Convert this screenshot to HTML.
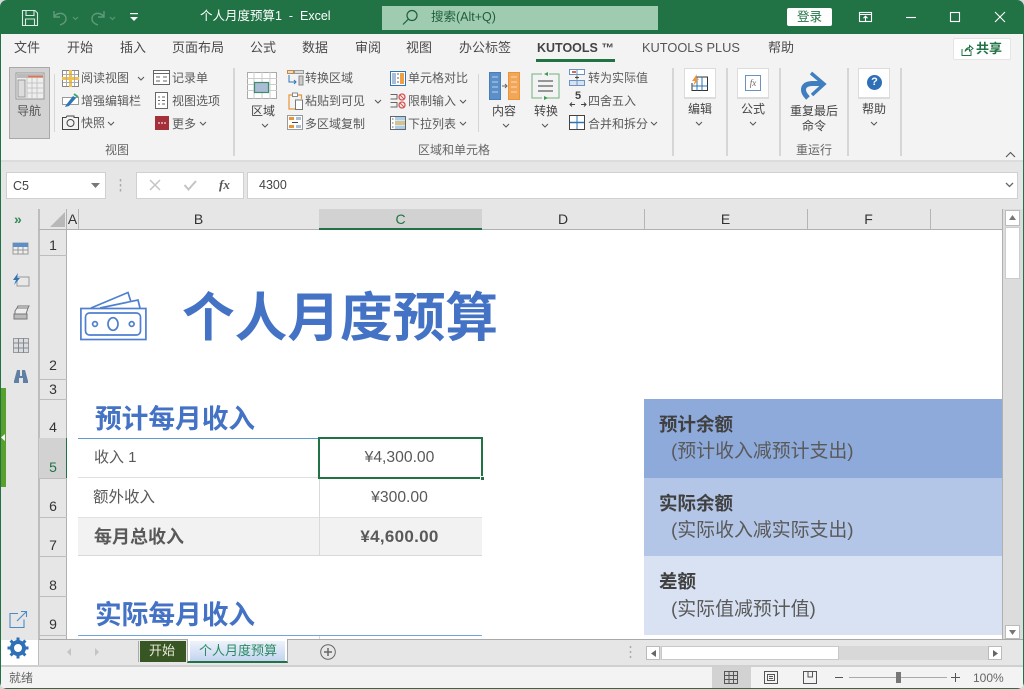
<!DOCTYPE html>
<html><head><meta charset="utf-8"><style>
*{box-sizing:border-box}
html,body{margin:0;padding:0;width:1024px;height:689px;overflow:hidden;background:#fff}
body{font-family:"Liberation Sans","Noto Sans CJK SC",sans-serif;position:relative}
div,svg{position:absolute}
.t{white-space:nowrap;font-size:12px;line-height:16px;color:#5a5a5a}
.tab{font-size:13px;line-height:18px;top:39px;color:#4a4a4a;white-space:nowrap}
.s{background:#d6d6d6;width:1px}
.ic{background:#fff;border:1px solid #dcdcdc;border-bottom-width:2px}
.rn{font-size:14px;line-height:16px;color:#333;width:28px;text-align:center;left:39px;white-space:nowrap}
.rl{background:#bdbdbd;height:1px;left:39px;width:28px}
.ch{font-size:14px;line-height:16px;color:#333;top:211px;text-align:center}
.cl{background:#b5b5b5;width:1px;top:209px;height:21px}
.v{font-size:15.700px;line-height:20px;color:#595959;text-align:center;left:318px;width:163px;white-space:nowrap}
.h{font-size:26.700px;line-height:34px;color:#4472c4;font-weight:bold;white-space:nowrap;left:95px}
.b1{font-size:18.500px;line-height:24px;font-weight:bold;color:#404040;left:659px;white-space:nowrap}
.b2{font-size:18.900px;line-height:24px;color:#595959;left:671px;white-space:nowrap}
</style></head><body>

<!-- title bar -->
<div style="left:0;top:0;width:1024px;height:34px;background:#217346"></div>
<svg style="left:20px;top:8px" width="20" height="20" viewBox="0 0 20 20" fill="none" stroke="#dcebe2" stroke-width="1.100"><path d="M2.500 2.500H15L17.500 5V17.500H2.500Z"/><path d="M6 2.500V7.500H14V2.500M5.500 17.500V11H14.500V17.500"/></svg>
<svg style="left:50px;top:9px" width="30" height="18" viewBox="0 0 30 18" fill="none" stroke="#5f9a7b" stroke-width="1.400"><path d="M4 2V8H10M4 8C7 3 15 3 16 9C16.500 13 13 15 10 16"/><path d="M23 8L25.500 10.500L28 8" stroke-width="1"/></svg>
<svg style="left:88px;top:9px" width="30" height="18" viewBox="0 0 30 18" fill="none" stroke="#5f9a7b" stroke-width="1.400"><path d="M16 2V8H10M16 8C13 3 5 3 4 9C3.500 13 7 15 10 16"/><path d="M22 8L24.500 10.500L27 8" stroke-width="1"/></svg>
<svg style="left:129px;top:12px" width="10" height="11" viewBox="0 0 10 11" fill="#fff"><rect x="1" y="1" width="8" height="1.200"/><path d="M1 5H9L5 9Z"/></svg>
<div class="t" style="left:200px;top:8px;font-size:12.500px;line-height:17px;color:#fff">个人月度预算1 &nbsp;-&nbsp; Excel</div>
<div style="left:382px;top:6px;width:276px;height:24px;background:#9fcbb1"></div>
<svg style="left:400px;top:8px" width="20" height="20" viewBox="0 0 20 20" fill="none" stroke="#1f5f3a" stroke-width="1.200"><circle cx="12" cy="7.500" r="5"/><path d="M8.500 11L3 16.500"/></svg>
<div class="t" style="left:431px;top:9px;font-size:12.500px;line-height:17px;color:#1f5f3a">搜索(Alt+Q)</div>
<div style="left:787px;top:8px;width:45px;height:18px;background:#fff;border-radius:2px"></div>
<div class="t" style="left:797px;top:9px;font-size:12.500px;color:#217346">登录</div>
<svg style="left:857px;top:9px" width="200" height="18" viewBox="0 0 200 18" fill="none" stroke="#fff" stroke-width="1.100"><rect x="2.500" y="3.500" width="12" height="9"/><path d="M2.500 5.500H14.500M8.500 12V7.500M6.500 9.200L8.500 7.200L10.500 9.200"/><path d="M49 8.500H59"/><rect x="93.500" y="3.500" width="9" height="9"/><path d="M138 3L148 13M148 3L138 13"/></svg>

<!-- ribbon -->
<div style="left:0;top:34px;width:1024px;height:127px;background:#f3f3f3"></div>
<div style="left:0;top:160px;width:1024px;height:2px;background:#dcdcdc"></div>
<div class="tab" style="left:14px">文件</div>
<div class="tab" style="left:67px">开始</div>
<div class="tab" style="left:120px">插入</div>
<div class="tab" style="left:172px">页面布局</div>
<div class="tab" style="left:250px">公式</div>
<div class="tab" style="left:302px">数据</div>
<div class="tab" style="left:355px">审阅</div>
<div class="tab" style="left:406px">视图</div>
<div class="tab" style="left:459px">办公标签</div>
<div class="tab" style="left:537px;font-weight:bold;font-size:12.500px;color:#444">KUTOOLS ™</div>
<div style="left:536px;top:59px;width:79px;height:3px;background:#217346"></div>
<div class="tab" style="left:642px;font-size:12.800px;color:#555">KUTOOLS PLUS</div>
<div class="tab" style="left:768px">帮助</div>
<div style="left:953px;top:38px;width:58px;height:22px;background:#fff;border:1px solid #e4e4e4;border-radius:2px"></div>
<svg style="left:960px;top:43px" width="14" height="14" viewBox="0 0 14 14" fill="none" stroke="#217346" stroke-width="1"><path d="M2 6V12.500H11V8M5 8.500C5.500 6 7.500 4.500 9.500 4.500V2.500L13 5.500L9.500 8V6C7.500 6 6 7 5 8.500Z"/></svg>
<div class="t" style="left:976px;top:40px;font-size:13px;line-height:17px;font-weight:bold;color:#217346">共享</div>

<!-- group seps -->
<div class="s" style="left:54px;top:74px;height:58px"></div>
<div class="s" style="left:233px;top:68px;height:88px;width:2px"></div>
<div class="s" style="left:478px;top:74px;height:58px"></div>
<div class="s" style="left:672px;top:68px;height:88px;width:2px"></div>
<div class="s" style="left:726px;top:68px;height:88px;width:2px"></div>
<div class="s" style="left:779px;top:68px;height:88px;width:2px"></div>
<div class="s" style="left:847px;top:68px;height:88px;width:2px"></div>
<div class="s" style="left:900px;top:68px;height:88px;width:2px"></div>

<!-- nav button -->
<div style="left:9px;top:67px;width:41px;height:72px;background:#d2d2d2;border:1px solid #a9a9a9"></div>
<svg style="left:15px;top:72px" width="30" height="28" viewBox="0 0 30 28"><rect x="1" y="1" width="28" height="26" fill="#eee" stroke="#999"/><rect x="2" y="2" width="26" height="4" fill="#bbb"/><path d="M13 4.500H28" stroke="#e8714a" stroke-width="1.500"/><path d="M12 6V27M17 6V27M22 6V27M12 11H28M12 16H28M12 21H28" stroke="#c5c5c5"/><rect x="3" y="8" width="7" height="17" fill="#ddd" stroke="#999"/></svg>
<div class="t" style="left:17px;top:103px;color:#555">导航</div>

<svg style="left:62px;top:70px" width="17" height="17" viewBox="0 0 17 17"><rect x=".5" y=".5" width="16" height="16" fill="#fff" stroke="#888"/><path d="M0 8.500H17M8.500 0V17" stroke="#f0c050" stroke-width="3"/><path d="M4.500 1V16M12.500 1V16M1 4.500H16M1 12.500H16" stroke="#aaa"/></svg>
<div class="t" style="left:81px;top:70px">阅读视图</div>
<svg style="left:137px;top:76px" width="8" height="5" fill="none" stroke="#555"><path d="M1 1L4 4L7 1"/></svg>
<svg style="left:62px;top:93px" width="17" height="15" viewBox="0 0 17 15"><rect x=".5" y="4.500" width="16" height="7" fill="#fff" stroke="#999"/><path d="M4 12L11 3L14 5L7 13L3 14Z" fill="#2e75b6"/><path d="M12 1L16 4" stroke="#3aa76d" stroke-width="2"/></svg>
<div class="t" style="left:81px;top:93px">增强编辑栏</div>
<svg style="left:62px;top:115px" width="17" height="15" viewBox="0 0 17 15" fill="none" stroke="#444"><path d="M.5 2.500H4L5 1H12V2.500H16.500V14.500H.5Z"/><circle cx="8.500" cy="8" r="3.500"/></svg>
<div class="t" style="left:81px;top:115px">快照</div>
<svg style="left:107px;top:121px" width="8" height="5" fill="none" stroke="#555"><path d="M1 1L4 4L7 1"/></svg>

<svg style="left:153px;top:70px" width="17" height="15" viewBox="0 0 17 15" fill="none" stroke="#666"><rect x=".5" y=".5" width="16" height="14" fill="#fff"/><path d="M1 3.500H16M3 7H7M10 7H14M3 11H7M10 11H14"/></svg>
<div class="t" style="left:172px;top:70px">记录单</div>
<svg style="left:155px;top:92px" width="13" height="17" viewBox="0 0 13 17" fill="none" stroke="#666"><rect x=".5" y=".5" width="12" height="16" fill="#fff"/><path d="M3 5H5M7 5H10M3 8.500H5M7 8.500H10M3 12H5M7 12H10"/></svg>
<div class="t" style="left:172px;top:93px">视图选项</div>
<svg style="left:155px;top:116px" width="14" height="14"><rect width="14" height="14" fill="#a4303a"/><path d="M3 7H5M6 7H8M9 7H11" stroke="#fff"/></svg>
<div class="t" style="left:172px;top:116px">更多</div>
<svg style="left:199px;top:121px" width="8" height="5" fill="none" stroke="#555"><path d="M1 1L4 4L7 1"/></svg>
<div class="t" style="left:105px;top:142px;color:#666">视图</div>

<!-- region -->
<svg style="left:247px;top:72px" width="30" height="27" viewBox="0 0 30 27"><rect x=".5" y=".5" width="29" height="26" fill="#fff" stroke="#aaa"/><path d="M0 6.500H30M0 12.500H30M0 18.500H30M7 0V27M15 0V27M23 0V27" stroke="#ccc"/><rect x="7.500" y="10.500" width="14" height="10" fill="#a9bdd6" stroke="#3f8a68" stroke-width="1.200"/></svg>
<div class="t" style="left:251px;top:103px;font-size:12px;color:#444">区域</div>
<svg style="left:261px;top:123px" width="8" height="5" fill="none" stroke="#555"><path d="M1 1L4 4L7 1"/></svg>

<svg style="left:287px;top:70px" width="17" height="16" viewBox="0 0 17 16" fill="none"><rect x=".5" y=".5" width="6" height="3" fill="#ddd" stroke="#c58a3a"/><rect x="7.500" y=".5" width="9" height="3" fill="#ddd" stroke="#999"/><path d="M2 5V12H9M7 10L9 12L7 14" stroke="#2e75b6"/><rect x="12" y="6" width="4" height="9" fill="#ccc" stroke="#888"/></svg>
<div class="t" style="left:305px;top:70px">转换区域</div>
<svg style="left:288px;top:92px" width="15" height="18" viewBox="0 0 15 18" fill="none"><path d="M4.500 3H1V17H7" stroke="#e8963a" stroke-width="1.200"/><path d="M10 3H13.500V7" stroke="#e8963a" stroke-width="1.200"/><rect x="4.500" y="1" width="5" height="3.500" fill="#fff" stroke="#888"/><rect x="7.500" y="8" width="7" height="9.500" fill="#fff" stroke="#777"/></svg>
<div class="t" style="left:305px;top:93px">粘贴到可见</div>
<svg style="left:374px;top:99px" width="8" height="5" fill="none" stroke="#555"><path d="M1 1L4 4L7 1"/></svg>
<svg style="left:287px;top:115px" width="16" height="15" viewBox="0 0 16 15"><rect x=".5" y=".5" width="15" height="14" fill="#fff" stroke="#999"/><rect x="2" y="2" width="5" height="3" fill="#e8963a"/><rect x="2" y="10" width="5" height="3" fill="#e8963a"/><rect x="9" y="2" width="5" height="3" fill="#a9bdd6"/><rect x="9" y="10" width="5" height="3" fill="#a9bdd6"/><path d="M5 7.500H11" stroke="#444"/></svg>
<div class="t" style="left:305px;top:116px">多区域复制</div>

<svg style="left:390px;top:71px" width="16" height="15" viewBox="0 0 16 15"><rect x=".5" y=".5" width="15" height="14" fill="#fff" stroke="#2e75b6"/><rect x="2" y="2" width="4" height="11" fill="#a9bdd6"/><rect x="10" y="2" width="4" height="11" fill="#f0a040"/><path d="M8 2V4M8 6V8M8 10V12" stroke="#666"/></svg>
<div class="t" style="left:408px;top:70px">单元格对比</div>
<svg style="left:390px;top:93px" width="17" height="16" viewBox="0 0 17 16" fill="none"><path d="M.5 1.500H7V6H.5M.5 9.500H7V14H.5" stroke="#666"/><circle cx="12" cy="4" r="3" stroke="#d9534f" stroke-width="1.300"/><circle cx="12" cy="12" r="3" stroke="#d9534f" stroke-width="1.300"/><path d="M10 2L14 6M10 10L14 14" stroke="#d9534f"/></svg>
<div class="t" style="left:408px;top:93px">限制输入</div>
<svg style="left:459px;top:99px" width="8" height="5" fill="none" stroke="#555"><path d="M1 1L4 4L7 1"/></svg>
<svg style="left:390px;top:116px" width="16" height="14" viewBox="0 0 16 14"><rect x=".5" y=".5" width="15" height="13" fill="#fff" stroke="#666"/><rect x="5" y="1" width="10" height="3.500" fill="#a9d0ea"/><rect x="5" y="5" width="10" height="4" fill="#d8c090"/><rect x="5" y="9.500" width="10" height="3.500" fill="#a9d0ea"/><path d="M2 3H3.500M2 7H3.500M2 11H3.500" stroke="#666"/></svg>
<div class="t" style="left:408px;top:116px">下拉列表</div>
<svg style="left:459px;top:121px" width="8" height="5" fill="none" stroke="#555"><path d="M1 1L4 4L7 1"/></svg>
<div class="t" style="left:418px;top:142px;color:#666">区域和单元格</div>

<!-- content / convert -->
<svg style="left:489px;top:72px" width="31" height="28" viewBox="0 0 31 28"><rect x=".5" y=".5" width="11" height="27" fill="#5b8fc9" stroke="#4a7db5"/><rect x="19.500" y=".5" width="11" height="27" fill="#f4a658" stroke="#e8963a"/><path d="M3 5H9M3 10H9M3 15H9M3 20H9M22 5H28M22 10H28M22 15H28M22 20H28" stroke="#fff" opacity=".6"/><path d="M13 14H18M16 12L18 14L16 16" stroke="#666" fill="none"/></svg>
<div class="t" style="left:492px;top:103px;color:#444">内容</div>
<svg style="left:502px;top:123px" width="8" height="5" fill="none" stroke="#555"><path d="M1 1L4 4L7 1"/></svg>
<svg style="left:531px;top:71px" width="29" height="29" viewBox="0 0 29 29" fill="none"><path d="M18 3H28V27H13M11 27H1V3H11" stroke="#6fb27f"/><path d="M17 1V5L13 3ZM13 25V29L17 27Z" fill="#3f9a55"/><path d="M7 10H22M7 15H22M7 20H22" stroke="#777" stroke-width="1.500"/></svg>
<div class="t" style="left:534px;top:103px;color:#444">转换</div>
<svg style="left:541px;top:123px" width="8" height="5" fill="none" stroke="#555"><path d="M1 1L4 4L7 1"/></svg>

<svg style="left:569px;top:69px" width="16" height="17" viewBox="0 0 16 17"><rect x=".5" y=".5" width="15" height="5" fill="#fff" stroke="#6a93c4"/><rect x=".5" y="11.500" width="15" height="5" fill="#d7e3f2" stroke="#6a93c4"/><path d="M3 3H7" stroke="#c0392b" stroke-width="1.500"/><path d="M8 6.500V10.500M6 8.500H10" stroke="#444"/><path d="M8 1V5M8 12V16" stroke="#6a93c4"/></svg>
<div class="t" style="left:588px;top:70px">转为实际值</div>
<div class="t" style="left:569px;top:90px;width:18px;text-align:center;font-size:11px;font-weight:bold;color:#444;line-height:13px">5</div>
<svg style="left:569px;top:101px" width="18" height="7" fill="none" stroke="#444"><path d="M1 3.500H6M3 1.500L1 3.500L3 5.500M12 3.500H17M15 1.500L17 3.500L15 5.500"/></svg>
<div class="t" style="left:588px;top:93px">四舍五入</div>
<svg style="left:569px;top:115px" width="16" height="15" viewBox="0 0 16 15" fill="none"><rect x=".5" y=".5" width="15" height="14" fill="#fff" stroke="#444"/><path d="M1 7.500H15" stroke="#2e75b6" stroke-width="1.500"/><path d="M8 1V14" stroke="#2e75b6"/></svg>
<div class="t" style="left:588px;top:116px">合并和拆分</div>
<svg style="left:650px;top:121px" width="8" height="5" fill="none" stroke="#555"><path d="M1 1L4 4L7 1"/></svg>

<!-- edit etc -->
<div class="ic" style="left:684px;top:68px;width:32px;height:31px"></div>
<svg style="left:691px;top:74px" width="18" height="18" viewBox="0 0 18 18"><path d="M4 3H16.500V16.500H1V9" fill="none" stroke="#333"/><path d="M1 12H16.500M6 3V16.500M11 3V16.500" stroke="#2e75b6"/><path d="M6 0L1 7H4L2 12L8 5H5Z" fill="#f0963a"/></svg>
<div class="t" style="left:688px;top:101px;color:#444">编辑</div>
<svg style="left:695px;top:121px" width="8" height="5" fill="none" stroke="#555"><path d="M1 1L4 4L7 1"/></svg>

<div class="ic" style="left:737px;top:68px;width:32px;height:31px"></div>
<svg style="left:745px;top:75px" width="16" height="16"><rect x=".5" y=".5" width="15" height="15" fill="#fff" stroke="#6a93c4"/></svg>
<div class="t" style="left:745px;top:75px;width:16px;text-align:center;font-size:9px;font-family:'Liberation Serif',serif;font-style:italic;color:#666">fx</div>
<div class="t" style="left:741px;top:101px;color:#444">公式</div>
<svg style="left:749px;top:121px" width="8" height="5" fill="none" stroke="#555"><path d="M1 1L4 4L7 1"/></svg>

<svg style="left:798px;top:71px" width="30" height="30" viewBox="0 0 30 30" fill="none"><path d="M10 27C3 20 4 13 14 12.500H24" stroke="#3f7fbf" stroke-width="5"/><path d="M13 2L26 13L14 24" stroke="#3f7fbf" stroke-width="3.500"/></svg>
<div class="t" style="left:790px;top:103px;color:#444">重复最后</div>
<div class="t" style="left:802px;top:118px;color:#444">命令</div>
<div class="t" style="left:796px;top:142px;color:#666">重运行</div>

<div class="ic" style="left:858px;top:68px;width:32px;height:31px"></div>
<svg style="left:867px;top:75px" width="15" height="15"><circle cx="7.500" cy="7.500" r="7.500" fill="#2e6fb7"/></svg>
<div class="t" style="left:867px;top:75px;width:15px;height:15px;text-align:center;font-size:11px;line-height:15px;font-weight:bold;color:#fff">?</div>
<div class="t" style="left:862px;top:101px;color:#444">帮助</div>
<svg style="left:870px;top:121px" width="8" height="5" fill="none" stroke="#555"><path d="M1 1L4 4L7 1"/></svg>
<svg style="left:1005px;top:151px" width="11" height="7" fill="none" stroke="#555" stroke-width="1.100"><path d="M1 6L5.500 1.500L10 6"/></svg>

<!-- formula bar -->
<div style="left:0;top:162px;width:1024px;height:478px;background:#e6e6e6"></div>
<div style="left:6px;top:172px;width:100px;height:27px;background:#fff;border:1px solid #d0d0d0"></div>
<div class="t" style="left:13px;top:178px;font-size:12.500px;color:#444">C5</div>
<svg style="left:91px;top:183px" width="9" height="5"><path d="M0 0H9L4.500 5Z" fill="#777"/></svg>
<svg style="left:119px;top:179px" width="4" height="13"><path d="M1.500 0V2.500M1.500 5V7.500M1.500 10V12.500" stroke="#aaa" stroke-width="1.500"/></svg>
<div style="left:136px;top:172px;width:108px;height:27px;background:#fff;border:1px solid #d0d0d0"></div>
<svg style="left:148px;top:179px" width="14" height="13" fill="none" stroke="#c4c4c4" stroke-width="1.500"><path d="M2 1L12 11M12 1L2 11"/></svg>
<svg style="left:183px;top:179px" width="15" height="13" fill="none" stroke="#c4c4c4" stroke-width="2"><path d="M1.500 6L5.500 10.500L13 2"/></svg>
<div class="t" style="left:219px;top:177px;font-family:'Liberation Serif',serif;font-style:italic;font-weight:bold;font-size:13px;color:#555">fx</div>
<div style="left:247px;top:172px;width:771px;height:27px;background:#fff;border:1px solid #d0d0d0"></div>
<div class="t" style="left:259px;top:177px;font-size:12.500px;color:#444">4300</div>
<svg style="left:1005px;top:182px" width="9" height="6" fill="none" stroke="#666" stroke-width="1.300"><path d="M1 1L4.500 4.500L8 1"/></svg>

<!-- left pane -->
<div style="left:38px;top:209px;width:2px;height:457px;background:#bdbdbd"></div>
<div class="t" style="left:14px;top:211px;font-size:14px;font-weight:bold;color:#2f8a55">»</div>
<svg style="left:12px;top:241px" width="18" height="16" viewBox="0 0 18 16"><rect x="1" y="2" width="15" height="11" fill="#eee" stroke="#999"/><rect x="1" y="2" width="15" height="4" fill="#5b8fc9"/><path d="M1 9H16M6 6V13M11 6V13" stroke="#999"/></svg>
<svg style="left:12px;top:273px" width="18" height="16" viewBox="0 0 18 16"><rect x="5" y="4" width="12" height="9" fill="#e8e8e8" stroke="#999"/><path d="M6 0L1 7H4L2 12L8 5H5Z" fill="#2e75b6"/></svg>
<svg style="left:12px;top:305px" width="18" height="16" viewBox="0 0 18 16"><path d="M2 9H15V14H2Z" fill="#bbb" stroke="#777"/><path d="M3 6L5 3H16L14 9H3ZM5 3L6 1H17L16 3" fill="#eee" stroke="#777"/></svg>
<svg style="left:13px;top:338px" width="16" height="15" viewBox="0 0 16 15"><rect x=".5" y=".5" width="15" height="14" fill="#d8dde3" stroke="#999"/><path d="M5.500 0V15M10.500 0V15M0 5H16M0 10H16" stroke="#888"/></svg>
<svg style="left:13px;top:369px" width="16" height="15" viewBox="0 0 16 15" fill="#5f7fa3"><path d="M4 1H7V7H9V1H12L15 12V14H10V9H6V14H1V12Z"/></svg>
<div style="left:1px;top:388px;width:5px;height:99px;background:#5aa02c"></div>
<svg style="left:1px;top:434px" width="5" height="8"><path d="M4 0V7L0 3.500Z" fill="#fff"/></svg>
<svg style="left:9px;top:610px" width="19" height="19" viewBox="0 0 19 19" fill="none" stroke="#4a8bc7" stroke-width="1.100"><path d="M9 3.500H1V17.500H15V9.500M8 11L17 2M12 1.500H17.500V7"/></svg>
<svg style="left:7px;top:637px" width="22" height="22" viewBox="0 0 22 22" fill="none" stroke="#2e6fb7"><circle cx="11" cy="11" r="6" stroke-width="4"/><path d="M11 .5V21.500M.5 11H21.500M3.600 3.600L18.400 18.400M18.400 3.600L3.600 18.400" stroke-width="3" stroke-dasharray="4.500 12.500"/></svg>

<!-- headers -->
<svg style="left:50px;top:212px" width="15" height="15"><path d="M15 0V15H0Z" fill="#b8b8b8"/></svg>
<div style="left:39px;top:229px;width:964px;height:1px;background:#b0b0b0"></div>
<div style="left:66px;top:209px;width:1px;height:430px;background:#b0b0b0"></div>
<div class="ch" style="left:67px;width:11px">A</div>
<div class="cl" style="left:78px"></div>
<div class="ch" style="left:78px;width:241px">B</div>
<div style="left:319px;top:209px;width:163px;height:19px;background:#d2d2d2"></div>
<div style="left:319px;top:228px;width:163px;height:2px;background:#217346"></div>
<div class="ch" style="left:319px;width:163px;color:#217346">C</div>
<div class="ch" style="left:482px;width:162px">D</div>
<div class="cl" style="left:644px"></div>
<div class="ch" style="left:644px;width:163px">E</div>
<div class="cl" style="left:807px"></div>
<div class="ch" style="left:807px;width:123px">F</div>
<div class="cl" style="left:930px"></div>

<div class="rn" style="top:237px">1</div><div class="rl" style="top:255px"></div>
<div class="rn" style="top:357px">2</div><div class="rl" style="top:379px"></div>
<div class="rn" style="top:381px">3</div><div class="rl" style="top:399px"></div>
<div class="rn" style="top:419px">4</div><div class="rl" style="top:438px"></div>
<div style="left:39px;top:438px;width:28px;height:40px;background:#d2d2d2"></div>
<div style="left:66px;top:438px;width:2px;height:40px;background:#217346"></div>
<div class="rn" style="top:459px;color:#217346">5</div><div class="rl" style="top:478px"></div>
<div class="rn" style="top:498px">6</div><div class="rl" style="top:517px"></div>
<div class="rn" style="top:537px">7</div><div class="rl" style="top:556px"></div>
<div class="rn" style="top:577px">8</div><div class="rl" style="top:596px"></div>
<div class="rn" style="top:616px">9</div><div class="rl" style="top:635px"></div>

<!-- sheet -->
<div style="left:67px;top:230px;width:935px;height:409px;background:#fff"></div>
<svg style="left:80px;top:291px" width="68" height="50" viewBox="0 0 68 50" fill="none" stroke="#4f7fd0" stroke-width="1.700"><path d="M11 17L48 1.500L51 11M20 17L58 9L60 17"/><rect x=".9" y="17.500" width="65" height="31"/><rect x="5.500" y="22" width="55" height="22" rx="4"/><circle cx="15" cy="33" r="2.400"/><circle cx="51.700" cy="33" r="2.400"/><ellipse cx="33" cy="33" rx="5" ry="6.300"/></svg>
<div style="left:182px;top:285px;font-size:52.700px;line-height:68px;font-weight:bold;color:#4472c4;white-space:nowrap">个人月度预算</div>

<div class="h" style="top:402px">预计每月收入</div>
<div style="left:78px;top:438px;width:404px;height:1px;background:#5b9bd5"></div>
<div style="left:78px;top:477px;width:404px;height:1px;background:#e0e0e0"></div>
<div style="left:78px;top:517px;width:404px;height:39px;background:#f2f2f2;border-top:1px solid #e0e0e0;border-bottom:1px solid #d9d9d9"></div>
<div style="left:319px;top:478px;width:1px;height:78px;background:#d9d9d9"></div>
<div class="t" style="left:94px;top:448px;font-size:15px;line-height:20px;color:#595959">收入 1</div>
<div class="t" style="left:93px;top:488px;font-size:15.500px;line-height:20px;color:#595959">额外收入</div>
<div class="t" style="left:94px;top:526px;font-size:18px;line-height:22px;font-weight:bold;color:#595959">每月总收入</div>
<div class="v" style="top:448px">¥4,300.00</div>
<div class="v" style="top:488px">¥300.00</div>
<div class="v" style="top:527px;font-weight:bold;font-size:17px;letter-spacing:.3px">¥4,600.00</div>
<div style="left:318px;top:437px;width:165px;height:42px;border:2px solid #217346"></div>
<div style="left:480px;top:476px;width:5px;height:5px;background:#217346;border:1px solid #fff"></div>

<div class="h" style="top:598px">实际每月收入</div>
<div style="left:78px;top:635px;width:404px;height:1px;background:#6fa6e2"></div>
<div style="left:319px;top:636px;width:1px;height:3px;background:#d9d9d9"></div>

<div style="left:644px;top:399px;width:358px;height:79px;background:#8eaadb"></div>
<div style="left:644px;top:478px;width:358px;height:78px;background:#b4c6e7"></div>
<div style="left:644px;top:556px;width:358px;height:79px;background:#d9e2f3"></div>
<div class="b1" style="top:413px">预计余额</div>
<div class="b2" style="top:440px">(预计收入减预计支出)</div>
<div class="b1" style="top:492px">实际余额</div>
<div class="b2" style="top:519px">(实际收入减实际支出)</div>
<div class="b1" style="top:570px">差额</div>
<div class="b2" style="top:598px">(实际值减预计值)</div>

<!-- v scrollbar -->
<div style="left:1002px;top:209px;width:1px;height:430px;background:#b0b0b0"></div>
<div style="left:1003px;top:209px;width:20px;height:431px;background:#dcdcdc"></div>
<div style="left:1005px;top:210px;width:15px;height:16px;background:#fff;border:1px solid #bbb"></div>
<svg style="left:1009px;top:215px" width="7" height="5"><path d="M3.500 0L7 5H0Z" fill="#777"/></svg>
<div style="left:1005px;top:227px;width:15px;height:52px;background:#fff;border:1px solid #ccc"></div>
<div style="left:1005px;top:625px;width:15px;height:14px;background:#fff;border:1px solid #bbb"></div>
<svg style="left:1009px;top:630px" width="7" height="5"><path d="M0 0H7L3.500 5Z" fill="#777"/></svg>

<!-- sheet tabs -->
<div style="left:39px;top:639px;width:985px;height:1px;background:#a9a9a9"></div>
<div style="left:39px;top:640px;width:985px;height:27px;background:#e6e6e6"></div>
<svg style="left:66px;top:648px" width="34" height="9"><path d="M5 0V8L1 4ZM29 0V8L33 4Z" fill="#c4c4c4"/></svg>
<div style="left:138px;top:641px;width:1px;height:21px;background:#aaa"></div>
<div style="left:140px;top:641px;width:46px;height:21px;background:#375623"></div>
<div class="t" style="left:149px;top:642px;font-size:13px;line-height:18px;color:#e8e8d8">开始</div>
<div style="left:187px;top:639px;width:101px;height:24px;background:#fff;border-left:1px solid #a9a9a9;border-right:1px solid #a9a9a9;border-bottom:2px solid #217346"></div>
<div style="left:190px;top:641px;width:95px;height:20px;background:linear-gradient(#eef3fb,#c3d4ef)"></div>
<div class="t" style="left:199px;top:642px;font-size:13px;line-height:18px;color:#2a8a64">个人月度预算</div>
<svg style="left:320px;top:644px" width="16" height="16" fill="none" stroke="#666"><circle cx="8" cy="8" r="7.300"/><path d="M4 8H12M8 4V12" stroke-width="1.500"/></svg>
<svg style="left:629px;top:646px" width="3" height="13"><path d="M1.500 0V2M1.500 5V7M1.500 10V12" stroke="#aaa" stroke-width="1.500"/></svg>
<div style="left:646px;top:646px;width:356px;height:14px;background:#d8d8d8"></div>
<div style="left:646px;top:646px;width:14px;height:14px;background:#fff;border:1px solid #bbb"></div>
<svg style="left:651px;top:650px" width="5" height="7"><path d="M5 0V7L0 3.500Z" fill="#666"/></svg>
<div style="left:661px;top:646px;width:178px;height:14px;background:#fff;border:1px solid #c8c8c8"></div>
<div style="left:988px;top:646px;width:14px;height:14px;background:#fff;border:1px solid #bbb"></div>
<svg style="left:993px;top:650px" width="5" height="7"><path d="M0 0V7L5 3.500Z" fill="#666"/></svg>

<!-- status bar -->
<div style="left:0;top:665px;width:1024px;height:2px;background:#d0d0d0"></div>
<div style="left:0;top:667px;width:1024px;height:21px;background:#f3f3f3"></div>
<div class="t" style="left:9px;top:670px;color:#666">就绪</div>
<div style="left:712px;top:667px;width:39px;height:21px;background:#d2d2d2"></div>
<svg style="left:724px;top:670px" width="100" height="15" viewBox="0 0 100 15" fill="none" stroke="#555"><rect x=".5" y="1.500" width="13" height="12"/><path d="M5 1.500V13.500M9.500 1.500V13.500M.5 5.500H13.500M.5 9.500H13.500"/><rect x="40.500" y="1.500" width="13" height="12"/><rect x="43.500" y="4.500" width="7" height="6"/><path d="M45 6.500H49M45 8.500H49"/><path d="M79.500 1.500H92.500V13.500H79.500ZM84 1.500V7H88.500V1.500"/></svg>
<div style="left:835px;top:677px;width:8px;height:1px;background:#555"></div>
<div style="left:849px;top:677px;width:98px;height:1px;background:#aaa"></div>
<div style="left:896px;top:672px;width:5px;height:11px;background:#777"></div>
<div style="left:951px;top:677px;width:9px;height:1px;background:#555"></div>
<div style="left:955px;top:673px;width:1px;height:9px;background:#555"></div>
<div class="t" style="left:973px;top:670px;font-size:12px;color:#666">100%</div>

<!-- window edges -->
<div style="left:0;top:34px;width:1px;height:655px;background:#217346"></div>
<div style="left:1023px;top:34px;width:1px;height:655px;background:#217346"></div>
<div style="left:0;top:688px;width:1024px;height:1px;background:#217346"></div>
<div style="left:0;top:0;width:1024px;height:689px;border-radius:7px;box-shadow:0 0 0 8px #d8d8d8"></div>
</body></html>
